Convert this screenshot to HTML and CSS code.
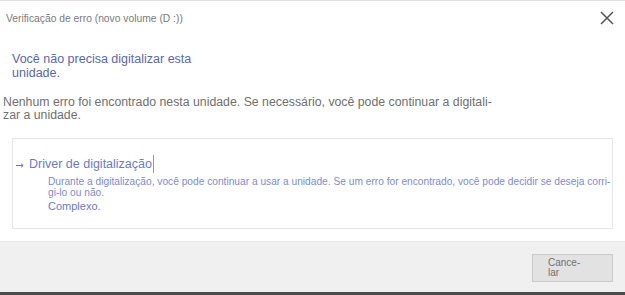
FILE: index.html
```html
<!DOCTYPE html>
<html lang="pt">
<head>
<meta charset="utf-8">
<title>Verificação de erro</title>
<link rel="stylesheet" href="styles.css">
</head>
<body>
<div class="dialog">
  <header class="titlebar">
    <span class="title">Verificação de erro (novo volume (D :))</span>
    <button class="close" aria-label="Fechar">
      <svg width="14" height="14" viewBox="0 0 14 14"><path d="M1 1 L13 13 M13 1 L1 13" stroke="#555" stroke-width="1.5" fill="none"/></svg>
    </button>
  </header>
  <main class="content">
    <h1 class="heading">Você não precisa digitalizar esta unidade.</h1>
    <p class="message">Nenhum erro foi encontrado nesta unidade. Se necessário, você pode continuar a digitali-zar a unidade.</p>
    <section class="option">
      <div class="option-title">
        <svg class="arrow" width="8" height="5" viewBox="0 0 8 5"><path d="M0 2.5 H7 M5 0.8 L7.2 2.5 L5 4.2" stroke="#6a7bc6" stroke-width="1" fill="none"/></svg>
        <span class="option-name">Driver de digitalização</span><span class="caret"></span>
      </div>
      <div class="option-body">
        <p class="option-desc"><span class="line">Durante a digitalização, você pode continuar a usar a unidade. Se um erro for encontrado, você pode decidir se deseja corri-</span><span class="line">gi-lo ou não.</span></p>
        <p class="option-more">Complexo.</p>
      </div>
    </section>
  </main>
  <footer class="footer">
    <button class="cancel"><span>Cance-</span><span>lar</span></button>
  </footer>
  <div class="edge"></div>
</div>
</body>
</html>
```
FILE: styles.css
```css
html, body {
  margin: 0;
  padding: 0;
  background: #ffffff;
}
body {
  width: 625px;
  height: 295px;
  overflow: hidden;
  font-family: "Liberation Sans", Arial, sans-serif;
}
.dialog {
  display: flex;
  flex-direction: column;
  height: 295px;
  border-top: 1px solid #e2e2e2;
  box-sizing: border-box;
}
.titlebar {
  display: flex;
  align-items: center;
  justify-content: space-between;
  height: 34px;
  padding: 0 11px 0 6px;
}
.title {
  font-size: 10.3px;
  color: #7a7a7a;
}
.close {
  border: 0;
  background: transparent;
  padding: 0;
  width: 14px;
  height: 14px;
  display: flex;
}
.content {
  flex: 1;
  display: flex;
  flex-direction: column;
}
.heading {
  margin: 17px 0 0 12px;
  width: 190px;
  font-size: 12.5px;
  font-weight: normal;
  line-height: 14px;
  color: #5869ab;
}
.message {
  margin: 16px 0 0 3px;
  width: 495px;
  font-size: 12.3px;
  line-height: 13px;
  color: #707070;
}
.option {
  margin: 16px 12px 0 12px;
  height: 91px;
  box-sizing: border-box;
  border: 1px solid #e6e6e6;
  padding-top: 16px;
}
.option-title {
  display: flex;
  align-items: center;
  height: 18px;
}
.arrow {
  margin: 3px 5px 0 3px;
}
.option-name {
  font-size: 12.5px;
  color: #6b7bc6;
}
.caret {
  display: inline-block;
  width: 1px;
  height: 18px;
  background: #7f9ad0;
  margin-left: 1px;
}
.option-body {
  padding-left: 35px;
  margin-top: 3px;
}
.option-desc {
  margin: 0;
  font-size: 10.2px;
  line-height: 11px;
  color: #7d8cd2;
  display: flex;
  flex-direction: column;
  white-space: nowrap;
}
.option-more {
  margin: 2px 0 0 0;
  font-size: 11px;
  color: #6b7bc6;
}
.footer {
  height: 51px;
  background: #f0f0f0;
  border-top: 1px solid #e8e8e8;
  box-sizing: border-box;
  display: flex;
  justify-content: flex-end;
  align-items: flex-start;
  padding: 12px 12px 0 0;
}
.cancel {
  width: 81px;
  height: 28px;
  box-sizing: border-box;
  background: #e2e2e2;
  border: 1px solid #c9c9c9;
  color: #6f6f6f;
  font-family: "Liberation Sans", Arial, sans-serif;
  font-size: 10px;
  line-height: 10px;
  text-align: left;
  padding: 3px 0 0 15px;
  display: flex;
  flex-direction: column;
  align-items: flex-start;
}
.edge {
  height: 3px;
  background: #4a4a4a;
}
```
